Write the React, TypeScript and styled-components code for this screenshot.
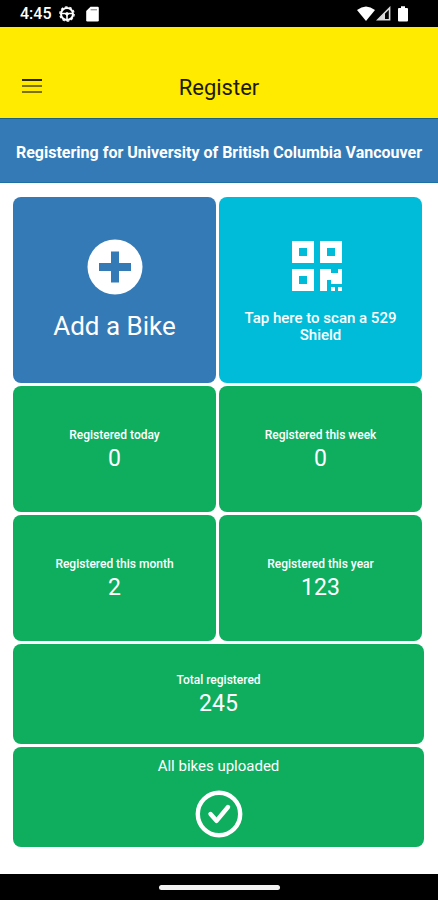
import React from "react";
import styled, { createGlobalStyle } from "styled-components";

const GlobalStyle = createGlobalStyle`
  *, *::before, *::after { box-sizing: border-box; }
  body {
    margin: 0;
    background: #fff;
    font-family: Roboto, "Liberation Sans", sans-serif;
  }
  button { font: inherit; cursor: pointer; }
`;

const Screen = styled.div`
  min-height: 100vh;
  display: flex;
  flex-direction: column;
`;

const StatusBar = styled.div`
  height: 27px;
  padding: 0 30px 0 20px;
  display: flex;
  align-items: center;
  justify-content: space-between;
  background: #000;
  color: #fff;
`;

const StatusGroup = styled.div<{ $gap: number }>`
  display: flex;
  align-items: center;
  gap: ${(p) => p.$gap}px;
`;

const Clock = styled.time`
  font-size: 16px;
  line-height: 20px;
  font-weight: 500;
`;

const Header = styled.header`
  height: 91px;
  padding: 34px 16px 4px;
  display: grid;
  grid-template-columns: 32px 1fr 32px;
  align-items: center;
  background: #ffeb00;
  color: #1c1a00;
`;

const MenuButton = styled.button`
  display: grid;
  place-items: center;
  height: 32px;
  padding: 0 0 4px;
  border: 0;
  background: none;
  color: inherit;
`;

const Title = styled.h1`
  margin: 0;
  font-size: 22px;
  line-height: 28px;
  font-weight: 400;
  text-align: center;
`;

const Banner = styled.p`
  margin: 0;
  padding: 24px 8px 19px;
  border-top: 1px solid #1a6285;
  border-bottom: 1px solid #1b70a6;
  background: #337ab7;
  color: #fff;
  font-size: 16px;
  line-height: 20px;
  font-weight: 700;
  text-align: center;
`;

const Board = styled.main`
  flex: 1;
  padding: 14px 14px 27px 13px;
  display: flex;
  flex-direction: column;
  gap: 3px;
`;

const Pair = styled.div`
  display: grid;
  grid-template-columns: 1fr 1fr;
  gap: 3px;
  padding-right: 2px;
`;

const tones = { blue: "#337ab7", cyan: "#00bcd9", green: "#0fae5f" };

const Tile = styled.section<{ $height: number; $tone?: keyof typeof tones }>`
  min-height: ${(p) => p.$height}px;
  padding: 8px 16px;
  display: flex;
  flex-direction: column;
  align-items: center;
  justify-content: center;
  border: 0;
  border-radius: 8px;
  background: ${(p) => tones[p.$tone ?? "green"]};
  color: #fff;
  text-align: center;
`;

const AddLabel = styled.span`
  margin-top: 15px;
  font-size: 26px;
  line-height: 32px;
`;

const ScanIcon = styled.span`
  display: flex;
  margin: 4px 8px 0 0;
`;

const ScanLabel = styled.span`
  margin-top: 19px;
  font-size: 15px;
  line-height: 17px;
  font-weight: 500;
`;

const StatLabel = styled.span`
  font-size: 12px;
  line-height: 20px;
  font-weight: 500;
`;

const StatValue = styled.span`
  font-size: 23px;
  line-height: 28px;
`;

const UploadLabel = styled.span`
  margin-bottom: 14px;
  font-size: 15px;
  line-height: 20px;
`;

const NavBar = styled.div`
  height: 26px;
  display: grid;
  place-items: center;
  background: #000;
`;

const HomeHandle = styled.div`
  width: 121px;
  height: 5px;
  border-radius: 3px;
  background: #f2f2f2;
`;

const WheelIcon = () => (
  <svg width="16" height="16" viewBox="0 0 16 16" fill="none" stroke="#fff" aria-hidden="true">
    <circle cx="8" cy="8" r="6" strokeWidth="2" />
    <circle cx="8" cy="8" r="7.2" strokeWidth="1.2" strokeDasharray="2.6 1.92" />
    <path d="M2.5 7.5h11M8 8v5.5" strokeWidth="1.6" />
    <circle cx="8" cy="8" r="1.3" fill="#fff" />
  </svg>
);

const CardIcon = () => (
  <svg width="13" height="16" viewBox="0 0 13 16" aria-hidden="true">
    <path d="M4.5 .8H11.6Q12.8 .8 12.8 2V14.2Q12.8 15.4 11.6 15.4H1.4Q.2 15.4 .2 14.2V5Z" fill="#fff" />
    <path d="M4.6 3.8H11" stroke="#777" strokeWidth="1" />
  </svg>
);

const WifiIcon = () => (
  <svg width="18" height="15" viewBox="0 0 18 15" aria-hidden="true">
    <path d="M0 4Q9-3.2 18 4L9 15Z" fill="#fff" />
  </svg>
);

const SignalIcon = () => (
  <svg width="15" height="15" viewBox="0 0 15 15" aria-hidden="true">
    <path d="M13.6 1.9V13.8H1.8Z" fill="none" stroke="#d8d8d8" strokeWidth="1.6" />
    <path d="M9 6.5V14H1.5Z" fill="#d8d8d8" />
  </svg>
);

const BatteryIcon = () => (
  <svg width="10" height="16" viewBox="0 0 10 16" aria-hidden="true">
    <path d="M3 .3H7V2H9Q10 2 10 3V14.5Q10 15.5 9 15.5H1Q0 15.5 0 14.5V3Q0 2 1 2H3Z" fill="#fff" />
  </svg>
);

const MenuIcon = () => (
  <svg width="20" height="16" viewBox="0 0 20 16" fill="none" strokeWidth="2" aria-hidden="true">
    <path d="M0 2H20" stroke="#29260a" />
    <path d="M0 8H20M0 14H20" stroke="#7a7108" />
  </svg>
);

const PlusIcon = () => (
  <svg width="56" height="56" viewBox="0 0 56 56" aria-hidden="true">
    <circle cx="28" cy="28" r="27.5" fill="#fff" />
    <path d="M24 12.5h8v11.5h12v8H32v11.5h-8V32H12V24h12Z" fill="#337ab7" />
  </svg>
);

const QrIcon = () => (
  <svg width="50" height="50" viewBox="0 0 50 50" fill="#fff" fillRule="evenodd" aria-hidden="true">
    <path d="M0 0h22v22H0ZM7 7v8h8V7Z" />
    <path d="M28 0h22v22H28ZM35 7v8h8V7Z" />
    <path d="M0 28h22v22H0ZM7 35v8h8v-8Z" />
    <path d="M28 28h11v4h7v-4h4v15H39v-4h-4v11h-7Z" />
    <path d="M39 46h4v4h-4ZM46 46h4v4h-4Z" />
  </svg>
);

const CheckIcon = () => (
  <svg width="48" height="48" viewBox="0 0 48 48" fill="none" stroke="#fff" aria-hidden="true">
    <circle cx="24" cy="24" r="21.2" strokeWidth="4.4" />
    <path d="M15.5 24l6 6.8L33 17" strokeWidth="4.4" strokeLinecap="round" strokeLinejoin="round" />
  </svg>
);

const Stat = ({ label, value, height }: { label: string; value: number; height: number }) => (
  <Tile $height={height}>
    <StatLabel>{label}</StatLabel>
    <StatValue>{value}</StatValue>
  </Tile>
);

export default function App() {
  return (
    <Screen>
      <GlobalStyle />
      <StatusBar>
        <StatusGroup $gap={7}>
          <Clock>4:45</Clock>
          <StatusGroup $gap={11}>
            <WheelIcon />
            <CardIcon />
          </StatusGroup>
        </StatusGroup>
        <StatusGroup $gap={1}>
          <WifiIcon />
          <StatusGroup $gap={7}>
            <SignalIcon />
            <BatteryIcon />
          </StatusGroup>
        </StatusGroup>
      </StatusBar>
      <Header>
        <MenuButton type="button" aria-label="Menu">
          <MenuIcon />
        </MenuButton>
        <Title>Register</Title>
      </Header>
      <Banner>Registering for University of British Columbia Vancouver</Banner>
      <Board>
        <Pair>
          <Tile as="button" type="button" $height={186} $tone="blue">
            <PlusIcon />
            <AddLabel>Add a Bike</AddLabel>
          </Tile>
          <Tile as="button" type="button" $height={186} $tone="cyan">
            <ScanIcon>
              <QrIcon />
            </ScanIcon>
            <ScanLabel>Tap here to scan a 529 Shield</ScanLabel>
          </Tile>
        </Pair>
        <Pair>
          <Stat label="Registered today" value={0} height={126} />
          <Stat label="Registered this week" value={0} height={126} />
        </Pair>
        <Pair>
          <Stat label="Registered this month" value={2} height={126} />
          <Stat label="Registered this year" value={123} height={126} />
        </Pair>
        <Stat label="Total registered" value={245} height={100} />
        <Tile $height={100}>
          <UploadLabel>All bikes uploaded</UploadLabel>
          <CheckIcon />
        </Tile>
      </Board>
      <NavBar>
        <HomeHandle />
      </NavBar>
    </Screen>
  );
}
